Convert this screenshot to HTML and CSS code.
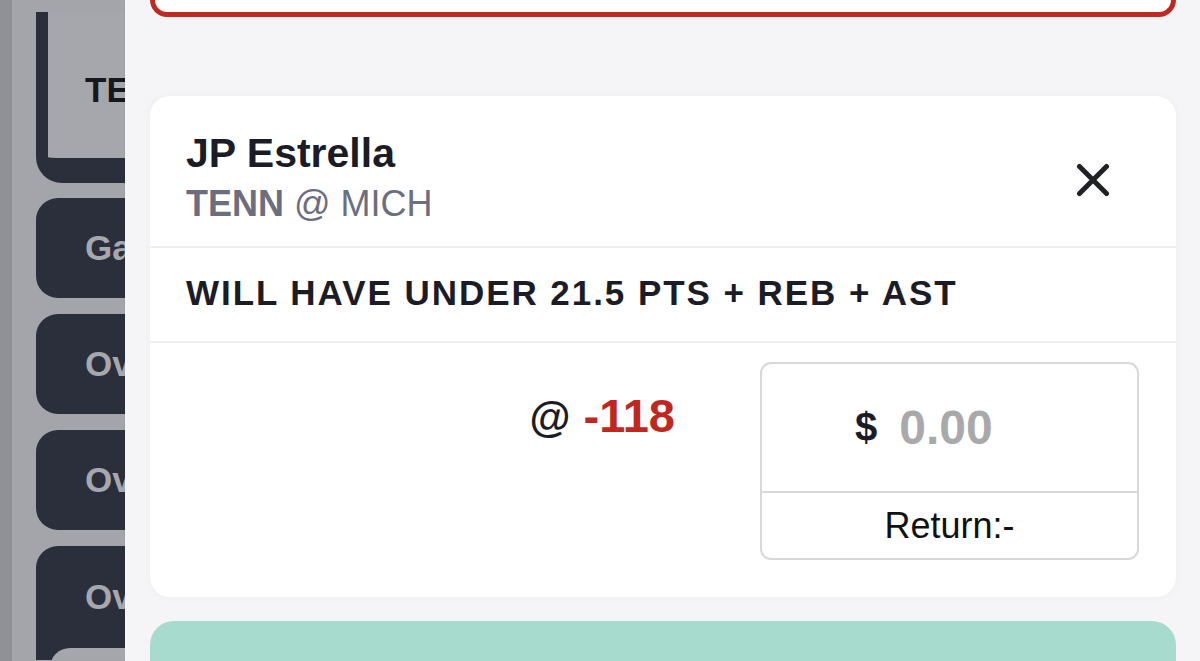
FILE: index.html
```html
<!DOCTYPE html>
<html lang="en">
<head>
<meta charset="utf-8">
<title>Bet Slip</title>
<link rel="stylesheet" href="styles.css">
</head>
<body>
<div class="page">
  <aside class="backdrop">
    <div class="tabs">
      <div class="tab tab-active">TENN</div>
      <div class="tab">Game</div>
      <div class="tab">Over</div>
      <div class="tab">Over</div>
      <div class="tab tab-last">Over<div class="tab-inner"></div></div>
    </div>
  </aside>
  <main class="sheet">
    <div class="prev-card"></div>
    <section class="bet-card">
      <header class="bet-head">
        <div class="bet-titles">
          <div class="player">JP Estrella</div>
          <div class="matchup"><span class="team">TENN</span> @ MICH</div>
        </div>
        <button class="close" aria-label="Close">
          <svg viewBox="0 0 34 34" width="34" height="34"><path d="M3.5 3.5 L30.5 30.5 M30.5 3.5 L3.5 30.5" stroke="#202124" stroke-width="5" stroke-linecap="round" fill="none"/></svg>
        </button>
      </header>
      <div class="prop">WILL HAVE UNDER 21.5 PTS + REB + AST</div>
      <div class="bet-body">
        <div class="odds"><span class="at">@</span> <span class="price">-118</span></div>
        <div class="stake">
          <div class="stake-input"><span class="dollar">$</span><span class="amount">0.00</span></div>
          <div class="stake-return">Return:-</div>
        </div>
      </div>
    </section>
    <div class="place-btn"></div>
  </main>
</div>
</body>
</html>
```
FILE: styles.css
```css
* { box-sizing: border-box; }
html, body { margin: 0; padding: 0; }
body {
  width: 1200px;
  height: 661px;
  overflow: hidden;
  font-family: "Liberation Sans", Arial, Helvetica, sans-serif;
  background: #f5f5f7;
}
.page {
  display: flex;
  height: 661px;
  overflow: hidden;
}
.backdrop {
  width: 125px;
  height: 661px;
  flex: none;
  background: #a4a5aa;
  border-left: 12px solid #909196;
  overflow: hidden;
}
.tabs {
  display: flex;
  flex-direction: column;
  gap: 16px;
  padding-left: 24px;
  width: 400px;
}
.tab {
  height: 100px;
  border-radius: 22px;
  background: #2a2f3b;
  color: #a7a8ae;
  font-weight: 700;
  font-size: 35px;
  padding-left: 49px;
  display: flex;
  align-items: center;
  flex: none;
}
.tab-active {
  margin-top: 12px;
  height: 171px;
  background: #a6a7ac;
  color: #17181e;
  border-left: 12px solid #2a2f3b;
  border-bottom: 25px solid #2a2f3b;
  border-radius: 0 0 0 26px;
  padding-left: 37px;
  align-items: flex-start;
  padding-top: 58px;
  margin-bottom: -1px;
}
.tab-last {
  height: 114px;
  position: relative;
  align-items: flex-start;
  padding-top: 31px;
  overflow: hidden;
  border-radius: 22px 22px 0 0;
}
.tab-inner {
  position: absolute;
  left: 14px;
  top: 102px;
  width: 300px;
  height: 60px;
  background: #a6a7ac;
  border-radius: 20px 0 0 0;
}
.sheet {
  flex: 1;
  height: 661px;
  overflow: hidden;
  background: #f5f5f7;
  padding: 0 24px 0 25px;
  display: flex;
  flex-direction: column;
  box-shadow: -1px 0 0 rgba(0,0,0,0.04);
}
.prev-card {
  height: 17px;
  background: #fff;
  border: 5px solid #bf2a20;
  border-top: none;
  border-radius: 0 0 22px 22px;
  flex: none;
}
.bet-card {
  margin-top: 79px;
  height: 501px;
  background: #fff;
  border-radius: 20px;
  box-shadow: 0 0 10px rgba(0,0,0,0.035);
  display: flex;
  flex-direction: column;
  flex: none;
}
.bet-head {
  display: flex;
  justify-content: space-between;
  align-items: flex-start;
  padding: 34px 66px 20px 36px;
  border-bottom: 2px solid #f0f0f3;
  height: 152px;
}
.player {
  font-size: 41px;
  line-height: 47px;
  font-weight: 700;
  color: #1b1c26;
}
.matchup {
  margin-top: 6px;
  font-size: 36px;
  line-height: 42px;
  color: #6c6e7d;
}
.team { font-weight: 700; }
.close {
  margin-top: 33px;
  width: 34px;
  height: 34px;
  padding: 0;
  border: none;
  background: none;
  display: block;
}
.close svg { display: block; }
.prop {
  padding: 24px 0 0 36px;
  height: 95px;
  border-bottom: 2px solid #f0f0f3;
  font-size: 35px;
  line-height: 42px;
  font-weight: 700;
  letter-spacing: 1.95px;
  color: #1b1c26;
  white-space: nowrap;
}
.bet-body {
  flex: 1;
  display: flex;
  justify-content: flex-end;
  align-items: flex-start;
  gap: 85px;
  padding: 19px 37px 0 0;
}
.odds {
  margin-top: 30px;
  font-size: 47px;
  line-height: 48px;
  font-weight: 700;
  white-space: nowrap;
}
.at { color: #1b1c26; font-size: 42px; }
.price { color: #c0281f; }
.stake {
  width: 379px;
  height: 198px;
  border: 2px solid #d8d8da;
  border-radius: 11px;
  display: flex;
  flex-direction: column;
}
.stake-input {
  height: 129px;
  border-bottom: 2px solid #d8d8da;
  display: flex;
  align-items: center;
  padding-left: 93px;
  padding-bottom: 1px;
}
.dollar {
  font-size: 40px;
  font-weight: 700;
  color: #1b1c26;
  margin-right: 22px;
}
.amount {
  font-size: 48px;
  font-weight: 700;
  color: #a9a9ab;
}
.stake-return {
  flex: 1;
  display: flex;
  align-items: center;
  justify-content: center;
  font-size: 36px;
  color: #111;
}
.place-btn {
  margin-top: 24px;
  height: 40px;
  background: #a7dbce;
  border-radius: 24px 24px 0 0;
  flex: none;
}
```
